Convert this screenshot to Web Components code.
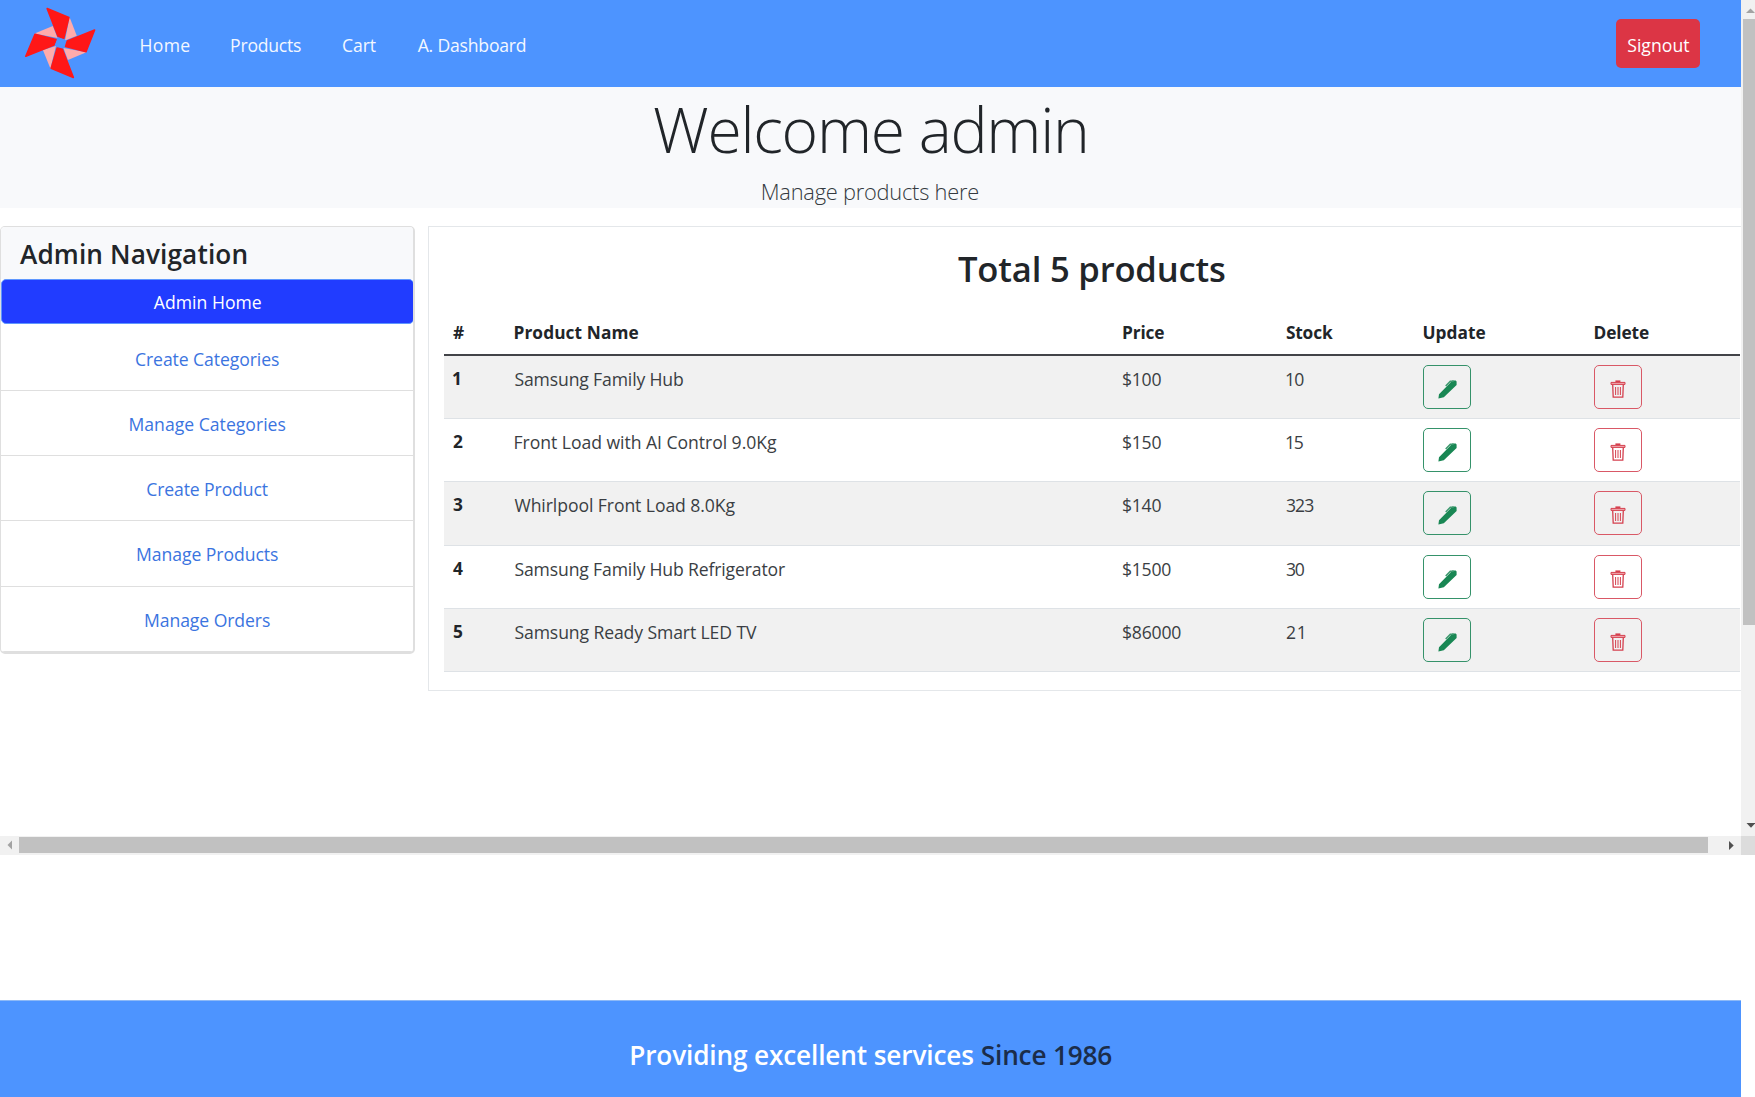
<!DOCTYPE html>
<html lang="en">
<head>
<meta charset="utf-8">
<title>Admin Dashboard</title>
<style>
html,body{margin:0;background:#fff;overflow:hidden}
body{font-family:"Open Sans","Noto Sans",sans-serif;font-size:17.6px;color:#212529;height:1097px}
</style>
</head>
<body>
<admin-page></admin-page>
<script>
const ctx = document.createElement('canvas').getContext('2d');

// Inline label whose glyphs span exactly the width given in its w attribute.
class FitText extends HTMLElement {
  connectedCallback() {
    const root = this.attachShadow({mode: 'open'});
    root.innerHTML = `<style>:host{display:inline-block;white-space:pre;text-align:left}span{display:inline-block}</style><span><slot></slot></span>`;
    const text = this.textContent, w = parseFloat(this.getAttribute('w')), cs = getComputedStyle(this);
    ctx.font = `${cs.fontWeight} ${cs.fontSize} ${cs.fontFamily}`;
    const m = ctx.measureText(text);
    const ink = m.actualBoundingBoxLeft + m.actualBoundingBoxRight;
    const s = root.querySelector('span');
    this.style.width = w + 'px';
    if (text.length > 1) s.style.letterSpacing = ((w - ink) / (text.length - 1)).toFixed(3) + 'px';
    s.style.marginLeft = m.actualBoundingBoxLeft.toFixed(2) + 'px';
  }
}

const define = (name, html) => customElements.define(name, class extends HTMLElement {
  connectedCallback() {
    if (this.shadowRoot) return;
    const t = document.createElement('template');
    t.innerHTML = typeof html === 'function' ? html(this) : html;
    this.attachShadow({mode: 'open'}).append(t.content.cloneNode(true));
  }
});

customElements.define('fit-text', FitText);

define('pinwheel-logo', `<style>:host{display:block;width:72px;height:87px}svg{display:block}</style>
<svg width="72" height="87" viewBox="24 0 72 87">
<g fill="#ffabab"><path d="M69.6 17.2 76.8 35.7 65 40.5z"/><path d="M34.6 33.4 52.8 26 57.5 38z"/><path d="M42.9 50 50.4 68.5 56 46z"/><path d="M86.4 52.3 67.9 60 63.5 48z"/></g>
<g fill="#ff1717" stroke="#ff1717" stroke-width="1.6" stroke-linejoin="round"><path d="M47.2 8.6 68.9 17.4 63.8 38.2 58 36.2z"/><path d="M94.6 30 86 51.6 65.6 46.4 67.3 41z"/><path d="M73.3 77.4 51.2 68.2 57.2 48 62.4 49.2z"/><path d="M25.8 56.2 35 34.2 56 39.6 54 45z"/></g>
<path fill="#4d94ff" d="M58.2 37.4 65.8 40.2 62.9 48 54.8 45.4z"/>
</svg>`);

define('nav-bar', `<style>:host{display:flex;height:87px;background:#4d94ff;color:#f4f8ff;padding:0 41px 0 24px;align-items:center;line-height:24px}
nav{display:flex;gap:41.9px;margin-left:44.6px;flex:1;padding-top:2px}
button{all:unset;box-sizing:border-box;width:83.6px;height:49px;border-radius:5px;background:#dc3545;color:#fff;text-align:center;line-height:53px}</style>
<pinwheel-logo></pinwheel-logo>
<nav><fit-text w="48.6">Home</fit-text><fit-text w="70">Products</fit-text><fit-text w="32.8">Cart</fit-text><fit-text w="108.2">A. Dashboard</fit-text></nav>
<button><fit-text w="62">Signout</fit-text></button>`);

define('page-hero', `<style>:host{display:block;height:121px;background:#f8f9fb;text-align:center;font-weight:300}
h1{margin:0;font-size:62.4px;font-weight:300;line-height:83.4px;height:82px;padding-right:2px}
p{margin:0;font-size:21.8px;line-height:46px;height:39px;color:#343a40}</style>
<h1><fit-text w="431">Welcome admin</fit-text></h1><p><fit-text w="215.5">Manage products here</fit-text></p>`);

define('side-link', h => `<style>:host{display:block;height:64.3px;border-bottom:1px solid #dfdfdf;text-align:center;line-height:67.6px;color:#3b74df;padding-left:1.4px}
:host([last]){height:64px}</style><fit-text w="${h.getAttribute('w')}">${h.getAttribute('label')}</fit-text>`);

define('side-nav', `<style>:host{display:block;box-sizing:border-box;width:414.6px;height:428px;border:1px solid #dfdfdf;border-width:1px 2px 2px 1px;border-radius:5px;overflow:hidden;background:#fff;margin-top:-.5px}
h4{margin:0;height:52.4px;box-sizing:border-box;background:#f8f9fb;font-size:26.2px;font-weight:600;line-height:54px;padding-left:19px}
.on{height:44.8px;box-sizing:border-box;background:#213cff;border:1px solid #5f97ff;border-radius:5px;color:#fff;text-align:center;line-height:44.4px;margin:0 -1px 1.4px 0}
</style><h4><fit-text w="226.4">Admin Navigation</fit-text></h4>
<div class="on"><fit-text w="107">Admin Home</fit-text></div>
<side-link w="143" label="Create Categories"></side-link><side-link w="156" label="Manage Categories"></side-link><side-link w="120.5" label="Create Product"></side-link><side-link w="141" label="Manage Products"></side-link><side-link w="125" label="Manage Orders" last></side-link>`);

define('icon-button', h => {
  const del = h.getAttribute('kind') === 'delete';
  return `<style>:host{display:flex;box-sizing:border-box;width:48px;height:44px;border:1px solid ${del ? '#d95866' : '#35926a'};border-radius:5px;align-items:center;justify-content:center;padding-top:5px}svg{display:block}</style>` + (del
  ? `<svg width="16" height="19" viewBox="0 0 16 19" fill="none" stroke="#d5404f"><path d="M5.4 1.2h5" stroke-width="1.6"/><path d="M1 2.4h14v2H1z" fill="#f1a9b0" stroke-width="1"/><path d="M2.7 4.6 3.2 17.2h9.6l.5-12.6" stroke-width="1.3"/><path d="M5.6 7v8M8 7v8M10.4 7v8" stroke-width="1"/></svg>`
  : `<svg width="19" height="19" viewBox="0 0 19 19" fill="#198754"><path d="M.4 18.6 1 14.2 11.8 3.2 14.3.5h3.4l.9.9v3.6L5.8 17.3z"/><path d="M7.7 6.1 12.3 1.2h3.4" fill="none" stroke="#3f9a70" stroke-width="1.5"/></svg>`);
});

const rows = [
  ['1', 'Samsung Family Hub', 168.5, '$100', 38.5, '10', 18.5],
  ['2', 'Front Load with AI Control 9.0Kg', 262.5, '$150', 38.5, '15', 18],
  ['3', 'Whirlpool Front Load 8.0Kg', 221, '$140', 38.5, '323', 28.5],
  ['4', 'Samsung Family Hub Refrigerator', 270.5, '$1500', 48.5, '30', 19],
  ['5', 'Samsung Ready Smart LED TV', 242.5, '$86000', 58.5, '21', 18]
];

define('product-table', `<style>
:host{display:block}
.r{display:grid;grid-template-columns:61.5px 608.4px 163px 137.6px 171px auto;padding-left:9px;box-sizing:border-box;height:63.15px;border-bottom:1px solid #dee2e6;line-height:46px}
.r.odd{background:#f1f1f1}
.r.h{height:46px;border-bottom:2px solid #424448;line-height:45px;font-weight:700;font-size:17.3px}
b{font-size:17.3px}
.c{color:#3a3e43}
icon-button{margin-top:9px;margin-left:-.2px}
icon-button[kind=delete]{margin-left:-.8px}
</style>
<div class="r h"><span><fit-text w="10">#</fit-text></span><span><fit-text w="124">Product Name</fit-text></span><span><fit-text w="41.5">Price</fit-text></span><span><fit-text w="47">Stock</fit-text></span><span><fit-text w="62">Update</fit-text></span><span><fit-text w="54.5">Delete</fit-text></span></div>
${rows.map((r, i) => `<div class="r${i % 2 ? '' : ' odd'}"><b><fit-text w="9">${r[0]}</fit-text></b><span class="c"><fit-text w="${r[2]}">${r[1]}</fit-text></span><span class="c"><fit-text w="${r[4]}">${r[3]}</fit-text></span><span class="c"><fit-text w="${r[6]}">${r[5]}</fit-text></span><icon-button kind="update"></icon-button><icon-button kind="delete"></icon-button></div>`).join('')}`);

define('product-panel', `<style>:host{display:block;box-sizing:border-box;flex:1;height:465px;border:1px solid #e4e7ea;border-right:0;padding:0 1px 0 15px;margin-top:-.5px}
h2{margin:0;height:83.2px;line-height:84px;font-size:34.6px;font-weight:600;text-align:center;padding-right:1px}</style>
<h2><fit-text w="267">Total 5 products</fit-text></h2><product-table></product-table>`);

define('scroll-bar', h => h.hasAttribute('vertical')
 ? `<style>:host{display:block;width:14px;height:836px;background:#f1f1f1;overflow:hidden}.t{margin:12px 0 0 2px;height:606px;background:#c1c1c1}svg{display:block}</style>
<svg width="14" height="7"></svg><svg width="14" height="6" style="margin-bottom:-6px"><path d="M5 6 9.5 1.5 14 6z" fill="#a3a3a3"/></svg><div class="t"></div><svg width="14" height="211"><path d="M5.5 198h9L10 202.7z" fill="#505050"/></svg>`
 : `<style>:host{display:flex;width:1755px;height:19px;background:#f1f1f1;align-items:center}.t{width:1689px;height:16px;background:#c1c1c1;margin-top:-1px}.k{width:14px;height:19px;background:#dcdcdc}svg{display:block}</style>
<svg width="19" height="19"><path d="M12 4.5v9L7.5 9z" fill="#a3a3a3"/></svg><div class="t"></div><svg width="33" height="19"><path d="M21 5v9L25.7 9.5z" fill="#505050"/></svg><div class="k"></div>`);

define('page-footer', `<style>:host{display:block;width:1741px;height:97px;box-sizing:border-box;background:#4d94ff;border-top:1px solid #8db9f7;text-align:center;font-size:26.2px;line-height:109px;overflow:hidden;padding-left:1.5px}
.w{color:#fff;font-weight:600}.s{font-weight:600;color:#1b2d4a;margin-left:8.6px}</style><fit-text class="w" w="342">Providing excellent services</fit-text><fit-text class="s" w="129.5">Since 1986</fit-text>`);

define('admin-page', `<style>:host{display:flex;flex-direction:column;width:1755px;height:1097px;overflow:hidden}
.top{display:flex;height:836px}.view{width:1741px}.cols{display:flex;gap:13.4px;padding-top:18.5px}.gap{height:145.5px}</style>
<div class="top"><div class="view"><nav-bar></nav-bar><page-hero></page-hero><div class="cols"><side-nav></side-nav><product-panel></product-panel></div></div><scroll-bar vertical></scroll-bar></div>
<scroll-bar></scroll-bar><div class="gap"></div><page-footer></page-footer>`);
</script>
</body>
</html>
